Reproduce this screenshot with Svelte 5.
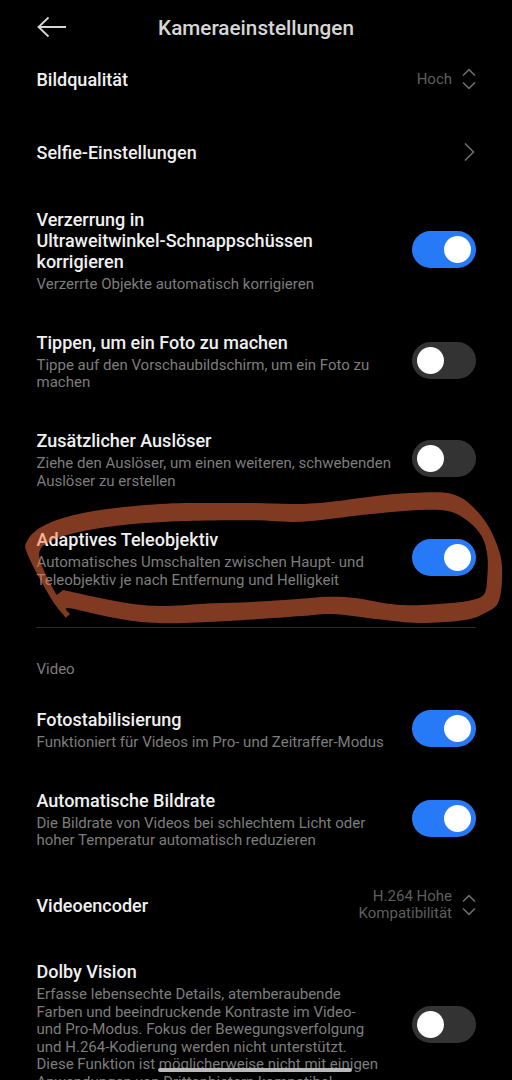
<script>
  let photo = [
    { title: "Bildqualität", value: "Hoch" },
    { title: "Selfie-Einstellungen", link: true },
    {
      title: "Verzerrung in\nUltraweitwinkel-Schnappschüssen\nkorrigieren",
      text: "Verzerrte Objekte automatisch korrigieren",
      checked: true,
    },
    {
      title: "Tippen, um ein Foto zu machen",
      text: "Tippe auf den Vorschaubildschirm, um ein Foto zu\nmachen",
      checked: false,
    },
    {
      title: "Zusätzlicher Auslöser",
      text: "Ziehe den Auslöser, um einen weiteren, schwebenden\nAuslöser zu erstellen",
      checked: false,
    },
    {
      title: "Adaptives Teleobjektiv",
      text: "Automatisches Umschalten zwischen Haupt- und\nTeleobjektiv je nach Entfernung und Helligkeit",
      checked: true,
    },
  ];

  let video = [
    {
      title: "Fotostabilisierung",
      text: "Funktioniert für Videos im Pro- und Zeitraffer-Modus",
      checked: true,
    },
    {
      title: "Automatische Bildrate",
      text: "Die Bildrate von Videos bei schlechtem Licht oder\nhoher Temperatur automatisch reduzieren",
      checked: true,
    },
    { title: "Videoencoder", value: "H.264 Hohe Kompatibilität" },
    {
      title: "Dolby Vision",
      text: "Erfasse lebensechte Details, atemberaubende\nFarben und beeindruckende Kontraste im Video-\nund Pro-Modus. Fokus der Bewegungsverfolgung\nund H.264-Kodierung werden nicht unterstützt.\nDiese Funktion ist möglicherweise nicht mit einigen\nAnwendungen von Drittanbietern kompatibel.",
      checked: false,
    },
  ];

  const outer = [
    [65.7, 617.7], [53, 601.5], [36.7, 573], [27, 553], [26, 543], [36.7, 530],
    [60, 519], [100, 510], [160, 504], [207, 503], [252, 503], [292, 504],
    [325, 502.5], [385, 495], [432, 492.3], [455, 495], [472, 506],
    [488.7, 526.7], [500.3, 555], [502, 580], [498, 603], [485, 613],
    [465, 620], [418.7, 623], [378.7, 619.3], [332, 614], [302, 616],
    [252, 619.5], [213, 621.7], [166.7, 623.3], [133, 621], [100, 615],
    [67.7, 608], [70, 614.3],
  ];

  const inner = [
    [56.7, 595], [46.7, 576.7], [40, 560], [40, 550], [46.7, 543.3],
    [63.3, 536], [93.3, 529.3], [133, 524], [186.7, 521], [252, 520.3],
    [292, 522], [318.7, 520.3], [368.7, 514.3], [418.7, 510], [448.7, 511.3],
    [468.7, 521.7], [482, 536.7], [487.3, 555], [487.3, 576.7], [484.3, 594],
    [472, 600], [452, 603], [412, 605.3], [385, 603.3], [355, 598],
    [328.7, 596.7], [295, 599.3], [252, 602], [213, 603.3], [166.7, 606],
    [133, 604], [100, 598], [63.3, 590],
  ];

  // open Catmull-Rom spline through the points, closed with a straight edge
  function smooth(points) {
    let d = `M${points[0]}`;
    for (let i = 0; i < points.length - 1; i++) {
      const b = points[i];
      const c = points[i + 1];
      const a = points[i - 1] || b;
      const e = points[i + 2] || c;
      d += `C${b[0] + (c[0] - a[0]) / 6} ${b[1] + (c[1] - a[1]) / 6}`;
      d += ` ${c[0] - (e[0] - b[0]) / 6} ${c[1] - (e[1] - b[1]) / 6} ${c}`;
    }
    return d + "Z";
  }
</script>

<style>
  :global(body) {
    background: #000;
  }
  .screen {
    position: relative;
    width: 512px;
    height: 1080px;
    overflow: hidden;
    background: #000;
    color: #f0f0f0;
    font-family: Roboto, sans-serif;
  }
  header {
    display: grid;
    grid-template-columns: 30px 1fr 30px;
    align-items: center;
    height: 43px;
    padding: 0 36px;
    box-sizing: border-box;
  }
  header svg {
    display: block;
  }
  h1 {
    margin: 13px 0 0;
    font-size: 20.7px;
    line-height: 26px;
    font-weight: 500;
    text-align: center;
    color: #d6d6d6;
  }
  .back {
    margin-top: 10px;
    padding: 0;
    border: 0;
    background: none;
  }
  section {
    padding: 0 36px 0 36.5px;
  }
  .row {
    display: flex;
    align-items: center;
    justify-content: space-between;
    min-height: 73px;
    padding: 19.8px 0 18.8px;
    box-sizing: border-box;
  }
  .row.single {
    padding: 0;
  }
  .label {
    white-space: pre-line;
  }
  h2 {
    margin: 0;
    font-size: 18px;
    line-height: 21px;
    font-weight: 500;
  }
  p {
    margin: 4px 0 0;
    font-size: 15px;
    line-height: 17.5px;
    color: #7d7d7d;
  }
  .value {
    display: flex;
    align-items: center;
    gap: 9px;
    font-size: 15px;
    line-height: 17.5px;
    text-align: right;
    color: #5e5e5e;
  }
  .value span {
    max-width: 100px;
  }
  .value svg {
    margin-bottom: 1px;
  }
  .switch {
    flex: none;
    width: 64px;
    height: 37px;
    margin-bottom: 3px;
    padding: 5px;
    border: 0;
    border-radius: 19px;
    box-sizing: border-box;
    background: #333;
    display: flex;
    align-items: center;
  }
  .switch.checked {
    justify-content: flex-end;
    background: #277af7;
  }
  .knob {
    width: 27px;
    height: 27px;
    border-radius: 50%;
    background: #fff;
  }
  hr {
    height: 1px;
    margin: 19px 36px 0;
    border: 0;
    background: #2b2b2b;
  }
  h3 {
    margin: 32px 0 11px;
    font-size: 15px;
    line-height: 18px;
    font-weight: 400;
    color: #7d7d7d;
  }
  .marker {
    position: absolute;
    top: 0;
    left: 0;
    pointer-events: none;
  }
  .home {
    position: absolute;
    left: 158px;
    top: 1068px;
    width: 194px;
    height: 4px;
    border-radius: 2px;
    background: #b9b9b9;
  }
</style>

{#snippet row(item)}
  <div class="row" class:single={!item.text}>
    <div class="label">
      <h2>{item.title}</h2>
      {#if item.text}<p>{item.text}</p>{/if}
    </div>
    {#if item.value}
      <div class="value">
        <span>{item.value}</span>
        <svg width="15" height="22" viewBox="0 0 15 22" fill="none" stroke="#6c6c6c" stroke-width="1.6">
          <path d="M2 7.5 8 1.7 14 7.5M2 14.5 8 20.3 14 14.5" />
        </svg>
      </div>
    {:else if item.link}
      <svg width="13" height="20" viewBox="0 0 13 20" fill="none" stroke="#6c6c6c" stroke-width="1.6">
        <path d="M2 0.5 10.5 9 2 17.5" />
      </svg>
    {:else}
      <button
        class="switch"
        class:checked={item.checked}
        role="switch"
        aria-checked={item.checked}
        aria-label={item.title}
        onclick={() => (item.checked = !item.checked)}>
        <span class="knob"></span>
      </button>
    {/if}
  </div>
{/snippet}

<div class="screen">
  <header>
    <button class="back" aria-label="Zurück">
      <svg width="30" height="22" viewBox="0 0 30 22" fill="none" stroke="#d6d6d6" stroke-width="1.8">
        <path d="M30 11H2.5M12.5 1.5 2.5 11 12.5 20.5" />
      </svg>
    </button>
    <h1>Kameraeinstellungen</h1>
  </header>
  <section>
    {#each photo as item}
      {@render row(item)}
    {/each}
  </section>
  <hr />
  <section>
    <h3>Video</h3>
    {#each video as item}
      {@render row(item)}
    {/each}
  </section>
  <svg class="marker" width="512" height="1080" viewBox="0 0 512 1080">
    <path d={smooth(outer) + smooth(inner)} fill="#ff7444" fill-opacity="0.5" fill-rule="evenodd" />
  </svg>
  <div class="home"></div>
</div>
